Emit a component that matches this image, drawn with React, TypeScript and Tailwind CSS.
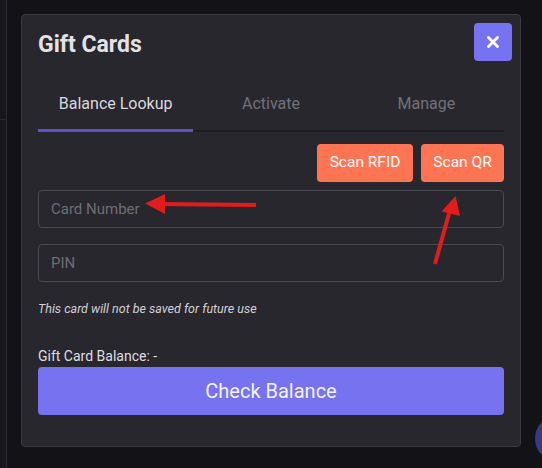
import { useState } from "react";

const tabs = ["Balance Lookup", "Activate", "Manage"];

export default function App() {
  const [active, setActive] = useState(0);

  return (
    <div className="relative w-[542px] h-[468px] overflow-hidden bg-[#131217] font-['Roboto',sans-serif]">
      {/* page behind the dialog */}
      <div className="absolute left-0 top-0 h-full w-[7px] border-r border-[#2b2a31] bg-[#17161c]">
        <div className="mt-[119px] h-px bg-[#2b2a31]" />
      </div>

      {/* Dialog */}
      <div className="relative ml-[21px] mt-[14px] flex h-[433px] w-[500px] flex-col rounded-[4px] border border-[#3a3940] bg-[#28272d]">
        <div className="flex items-start justify-between pl-4 pr-[8px] pt-2">
          <h2 className="mt-[7px] text-[23px] font-bold leading-[30px] text-[#e3e3e6]">Gift Cards</h2>
          <button className="flex h-[38px] w-[38px] items-center justify-center rounded-[4px] bg-[#7772f1]">
            <svg width="12" height="12" viewBox="0 0 12 12" fill="none">
              <path d="M1.5 1.5l9 9M10.5 1.5l-9 9" stroke="#fff" strokeWidth="2.8" strokeLinecap="round" />
            </svg>
          </button>
        </div>

        <div className="mx-4 mt-[33px] flex border-b-2 border-[#1d1c21]">
          {tabs.map((t, i) => (
            <button
              key={t}
              onClick={() => setActive(i)}
              className={`relative flex-1 pb-[16px] text-[16px] leading-[20px] ${
                i === active ? "text-[#d9d9dd]" : "text-[#727179]"
              }`}
            >
              {t}
              {i === active && <span className="absolute bottom-[-2px] left-0 right-0 h-[3px] bg-[#5b55c9]" />}
            </button>
          ))}
        </div>

        <div className="flex flex-col px-4">
          <div className="mt-[12px] flex justify-end gap-2">
            <button className="h-[38px] w-[96px] rounded-[4px] bg-[#ff7553] text-[15.5px] text-white">Scan RFID</button>
            <button className="h-[38px] w-[83px] rounded-[4px] bg-[#ff7553] text-[15.5px] text-white">Scan QR</button>
          </div>

          <input
            placeholder="Card Number"
            className="mt-2 h-[38px] rounded-[4px] border border-[#4a4950] bg-transparent px-3 text-[15px] text-[#e0e0e3] outline-none placeholder:text-[#6e6d75]"
          />
          <input
            placeholder="PIN"
            className="mt-4 h-[38px] rounded-[4px] border border-[#4a4950] bg-transparent px-3 text-[15px] text-[#e0e0e3] outline-none placeholder:text-[#6e6d75]"
          />

          <p className="mt-[19px] text-[12.5px] italic leading-[16px] text-[#d2d2d6]">
            This card will not be saved for future use
          </p>

          <div className="mt-[29px] text-[14px] leading-[20px] text-[#dedee2]">Gift Card Balance: -</div>

          <button className="mt-px h-[48px] rounded-[4px] bg-[#7672f0] text-[20px] text-[#f3f3ff]">
            Check Balance
          </button>
        </div>
      </div>

      {/* floating button peeking in at the corner */}
      <div className="absolute left-[535px] top-[415px] h-[47px] w-[47px] rounded-full bg-[#3c3983]" />

      {/* annotation arrows */}
      <svg className="pointer-events-none absolute left-0 top-0" width="542" height="468">
        <line x1="256" y1="205" x2="160" y2="204" stroke="#e21c1c" strokeWidth="4" />
        <polygon points="145,203.5 165,194 165,214" fill="#e21c1c" />
        <line x1="435" y1="264" x2="450" y2="210" stroke="#e21c1c" strokeWidth="4" />
        <polygon points="455.5,196 441.5,211.5 460,216" fill="#e21c1c" />
      </svg>
    </div>
  );
}
